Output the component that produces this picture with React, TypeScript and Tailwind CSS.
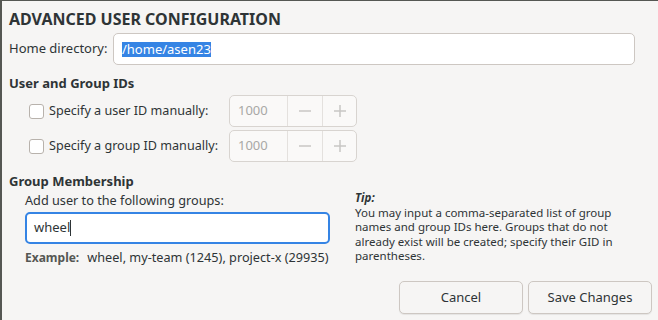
import React from "react";

function SpinRow({ label }: { label: string }) {
  return (
    <div className="flex items-center h-[32px]">
      <div className="w-[15px] h-[15px] ml-[20px] rounded-[3px] border border-[#b8b2ac] bg-white" />
      <span className="ml-[5px] w-[180px] text-[12.6px] text-[#2e3436] whitespace-nowrap">{label}</span>
      <div className="flex h-[32px] w-[128px] rounded-[5px] border border-[#d8d4d0] bg-[#faf9f8] text-[#a8a8a6]">
        <div className="flex items-center pl-[8px] w-[57px] text-[13px]">1000</div>
        <div className="flex items-center justify-center w-[35px] border-l border-[#e4e1de]">
          <svg width="16" height="16" viewBox="0 0 16 16"><path d="M2 8h12" stroke="#c8c6c4" strokeWidth="1.5" /></svg>
        </div>
        <div className="flex items-center justify-center flex-1 border-l border-[#e4e1de]">
          <svg width="16" height="16" viewBox="0 0 16 16"><path d="M2 8h12M8 2v12" stroke="#c8c6c4" strokeWidth="1.5" /></svg>
        </div>
      </div>
    </div>
  );
}

export default function App() {
  return (
    <div
      className="w-[658px] h-[320px] bg-[#f6f5f4] border-t border-l-2 border-[#555753] text-[#2e3436] overflow-hidden"
      style={{ fontFamily: '"Noto Sans", sans-serif' }}
    >
      <div className="pl-[7px] pt-[6px]">
        <div className="text-[16px] font-bold leading-[24px]">ADVANCED USER CONFIGURATION</div>
        <div className="flex items-center mt-[2px] h-[32px]">
          <span className="text-[13px] w-[104px]">Home directory:</span>
          <div className="flex items-center w-[522px] h-[32px] rounded-[5px] border border-[#cdc7c2] bg-white px-[8px]">
            <span className="text-[13px] bg-[#3584e4] text-white leading-[15px]">/home/asen23</span>
          </div>
        </div>
        <div className="mt-[9px] text-[13px] font-bold leading-[18px]">User and Group IDs</div>
        <div className="mt-[3px] flex flex-col gap-[3px]">
          <SpinRow label="Specify a user ID manually:" />
          <SpinRow label="Specify a group ID manually:" />
        </div>
        <div className="mt-[10px] text-[13px] font-bold leading-[18px]">Group Membership</div>
        <div className="flex mt-[1px]">
          <div className="pl-[16px] w-[323px]">
            <div className="text-[12.7px] leading-[18px]">Add user to the following groups:</div>
            <div className="mt-[3px] flex items-center w-[305px] h-[32px] rounded-[5px] border-2 border-[#3584e4] bg-white px-[7px] text-[13px]">
              wheel<span className="inline-block w-px h-[16px] bg-[#2e3436]" />
            </div>
            <div className="mt-[3px] leading-[18px] whitespace-nowrap">
              <span className="text-[12px] font-bold text-[#555753]">Example:</span>
              <span className="ml-[8px] text-[12.7px] text-[#2e3436]">wheel, my-team (1245), project-x (29935)</span>
            </div>
          </div>
          <div className="ml-[23px] w-[285px] text-[11.5px] leading-[14.6px]">
            <div className="font-bold italic">Tip:</div>
            <div>
              You may input a comma-separated list of group names and group IDs here. Groups that do not already exist will be created; specify their GID in parentheses.
            </div>
          </div>
        </div>
        <div className="flex justify-end gap-[5px] pr-[6px] mt-[14px]">
          <button className="w-[124px] h-[33px] rounded-[5px] border border-[#cdc7c2] bg-[#f6f5f4] text-[13px] shadow-[0_1px_1px_rgba(0,0,0,0.07)]">Cancel</button>
          <button className="w-[124px] h-[33px] rounded-[5px] border border-[#cdc7c2] bg-[#f6f5f4] text-[13px] shadow-[0_1px_1px_rgba(0,0,0,0.07)]">Save Changes</button>
        </div>
      </div>
    </div>
  );
}
